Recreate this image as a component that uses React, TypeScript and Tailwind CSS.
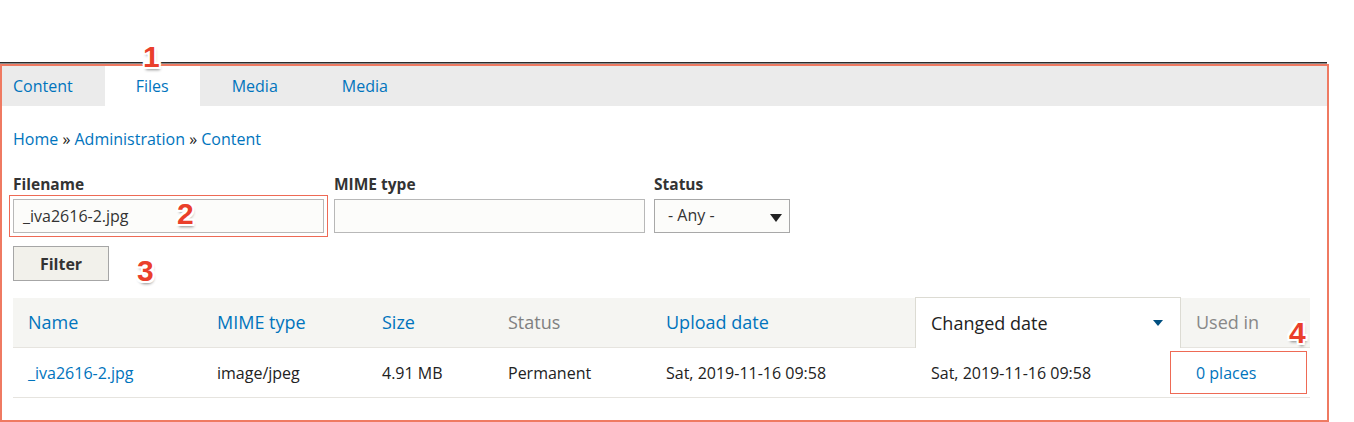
import React from "react";

const Num = ({ n, className }: { n: string; className: string }) => (
  <span
    className={
      "absolute font-bold text-[30px] leading-none text-[#ea3f2b] [font-family:'Liberation_Sans',Arial,sans-serif] [text-shadow:-2px_-2px_0_#fff,2px_-2px_0_#fff,-2px_2px_0_#fff,2px_2px_0_#fff,0_-2px_0_#fff,0_2px_0_#fff,-2px_0_0_#fff,2px_0_0_#fff,1px_3px_3px_rgba(0,0,0,0.45)] " +
      className
    }
  >
    {n}
  </span>
);

export default function App() {
  const cols = [
    { w: "w-[189px]", label: "Name", cls: "text-[#0074bd]" },
    { w: "w-[165px]", label: "MIME type", cls: "text-[#0074bd]" },
    { w: "w-[126px]", label: "Size", cls: "text-[#0074bd]" },
    { w: "w-[158px]", label: "Status", cls: "text-[#808080]" },
    { w: "w-[264px]", label: "Upload date", cls: "text-[#0074bd]" },
  ];
  const row = ["image/jpeg", "4.91 MB", "Permanent", "Sat, 2019-11-16 09:58"];
  return (
    <div className="relative w-[1354px] h-[422px] bg-white [font-family:'Open_Sans',sans-serif] text-[#222]">
      <div className="h-[62px]" />
      <div className="w-[1327px] h-px bg-[#2a2a2a]" />
      <div className="w-[1327px] h-px bg-[#8a8a8a]" />
      <div className="w-[1329px] h-[358px] border-2 border-[#ef7a62] flex flex-col">
        {/* tabs */}
        <div className="h-[40px] bg-[#ebebeb] flex text-[16px] text-[#0074bd]">
          <div className="pl-[11px] pr-[32px] flex items-center">Content</div>
          <div className="px-[31px] bg-white flex items-center">Files</div>
          <div className="px-[32px] flex items-center">Media</div>
          <div className="px-[32px] flex items-center">Media</div>
        </div>
        <div className="pl-[11px] flex flex-col">
          <div className="h-[22px] mt-[22px] text-[16px] leading-[22px] text-[#0074bd]">
            Home <span className="text-[#222]">»</span> Administration{" "}
            <span className="text-[#222]">»</span> Content
          </div>
          {/* filters */}
          <div className="flex mt-[24px]">
            <div className="flex flex-col w-[311px]">
              <label className="text-[15.5px] font-bold leading-[20px] text-[#333] h-[20px]">Filename</label>
              <div className="mt-[5px] h-[34px] border border-[#b8b8b8] bg-[#fcfcfa] flex items-center pl-[9px] text-[16px] text-[#333] outline-[1.5px] outline-solid outline-[#ee6a55] outline-offset-[3px]">
                _iva2616-2.jpg
              </div>
            </div>
            <div className="flex flex-col w-[311px] ml-[10px]">
              <label className="text-[15.5px] font-bold leading-[20px] text-[#333] h-[20px]">MIME type</label>
              <div className="mt-[5px] h-[34px] border border-[#b8b8b8] bg-[#fcfcfa]" />
            </div>
            <div className="flex flex-col w-[136px] ml-[9px]">
              <label className="text-[15.5px] font-bold leading-[20px] text-[#333] h-[20px]">Status</label>
              <div className="mt-[5px] h-[34px] border border-[#a8a8a8] bg-[#fcfcfa] flex items-center justify-between pl-[13px] pr-[7px] text-[16px] text-[#333]">
                <span className="-mt-[2px]">- Any -</span>
                <svg width="12" height="8" viewBox="0 0 12 8" className="mt-[3px]">
                  <path d="M0 0 L12 0 L6 8 Z" fill="#222" />
                </svg>
              </div>
            </div>
          </div>
          <button className="mt-[13px] w-[96px] h-[35px] border border-[#a6a6a6] bg-[#f2f1eb] text-[16px] font-bold text-[#333] flex items-center justify-center">
            Filter
          </button>
          {/* table */}
          <div className="mt-[17px] w-[1297px] flex flex-col">
            <div className="flex h-[50px] bg-[#f5f5f2] border-b border-[#e6e4df] text-[18px]">
              {cols.map((c) => (
                <div key={c.label} className={c.w + " pl-[15px] flex items-center " + c.cls}>
                  {c.label}
                </div>
              ))}
              <div className="w-[266px] -mt-px h-[51px] bg-white border border-b-0 border-[#dcdbd3] pl-[15px] pr-[17px] flex items-center justify-between text-[#222]">
                <span>Changed date</span>
                <svg width="10" height="6" viewBox="0 0 10 6">
                  <path d="M0 0 L10 0 L5 6 Z" fill="#004f80" />
                </svg>
              </div>
              <div className="flex-1 pl-[15px] flex items-center text-[#888]">Used in</div>
            </div>
            <div className="flex h-[50px] border-b border-[#e6e4df] text-[16px] text-[#222]">
              <div className="w-[189px] pl-[15px] flex items-center text-[#0074bd]">_iva2616-2.jpg</div>
              <div className="w-[165px] pl-[15px] flex items-center">{row[0]}</div>
              <div className="w-[126px] pl-[15px] flex items-center">{row[1]}</div>
              <div className="w-[158px] pl-[15px] flex items-center">{row[2]}</div>
              <div className="w-[264px] pl-[15px] flex items-center">{row[3]}</div>
              <div className="w-[266px] pl-[16px] flex items-center">{row[3]}</div>
              <div className="flex-1 flex items-center">
                <div className="ml-[-11px] w-[137px] h-[43px] border-[1.5px] border-[#ee6a55] flex items-center pl-[25px] text-[#0074bd]">
                  0 places
                </div>
              </div>
            </div>
          </div>
        </div>
      </div>
      <Num n="1" className="left-[143px] top-[42px]" />
      <Num n="2" className="left-[177px] top-[199px]" />
      <Num n="3" className="left-[137px] top-[256px]" />
      <Num n="4" className="left-[1289px] top-[318px]" />
    </div>
  );
}
